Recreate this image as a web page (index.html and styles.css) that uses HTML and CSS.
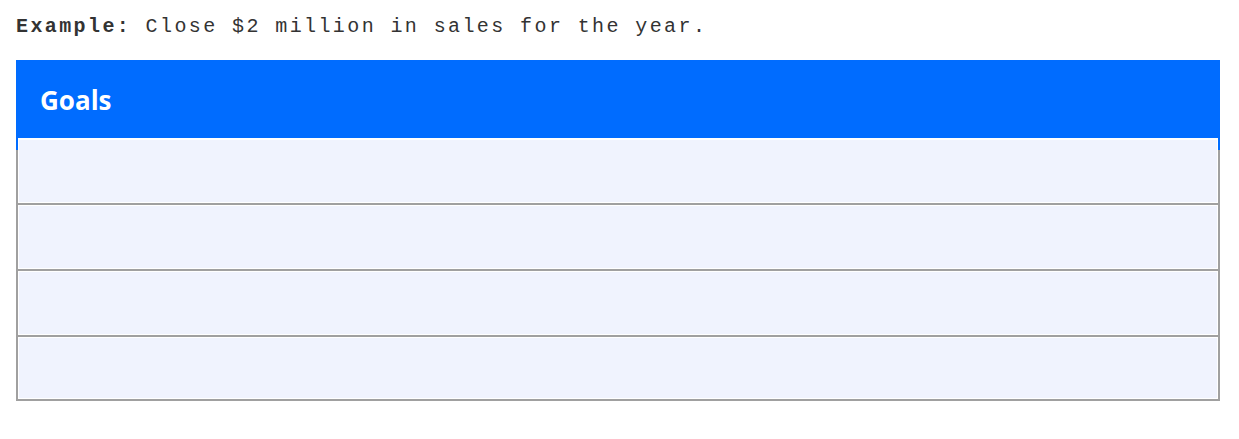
FILE: index.html
```html
<!DOCTYPE html>
<html>
<head>
<meta charset="utf-8">
<link rel="stylesheet" href="styles.css">
</head>
<body>
<div class="page">
  <p class="example"><b>Example:</b> Close $2 million in sales for the year.</p>
  <div class="goals">
    <div class="goals-head">Goals</div>
    <div class="goals-body">
      <div class="row row-first"></div>
      <div class="row"></div>
      <div class="row"></div>
      <div class="row row-last"></div>
    </div>
  </div>
</div>
</body>
</html>
```

FILE: styles.css
```css
html, body {
  margin: 0;
  padding: 0;
  background: #ffffff;
}
.page {
  padding: 0 19px 0 16px;
}
.example {
  margin: 0;
  padding-top: 15px;
  height: 60px;
  box-sizing: border-box;
  font-family: "Liberation Mono", "Courier New", monospace;
  font-size: 20px;
  line-height: 24px;
  letter-spacing: 2.4px;
  color: #333333;
}
.example b {
  font-weight: bold;
}
.goals {
  width: 1204px;
}
.goals-head {
  height: 78px;
  box-sizing: border-box;
  background: #006cff;
  color: #ffffff;
  font-family: "Open Sans", "Noto Sans", sans-serif;
  font-weight: bold;
  font-size: 26px;
  line-height: 80px;
  padding-left: 24px;
}
.goals-body {
  display: flex;
  flex-direction: column;
  gap: 2px;
  padding: 0 2px 2px;
  background: linear-gradient(to bottom, #006cff 0, #006cff 12px, #a0a0a0 12px);
}
.row {
  height: 64px;
  box-sizing: border-box;
  background: #f0f3fe;
  border: 1px solid #ffffff;
}
.row-first {
  height: 65px;
  border-top-width: 2px;
}
.row-last {
  height: 62px;
}
```
